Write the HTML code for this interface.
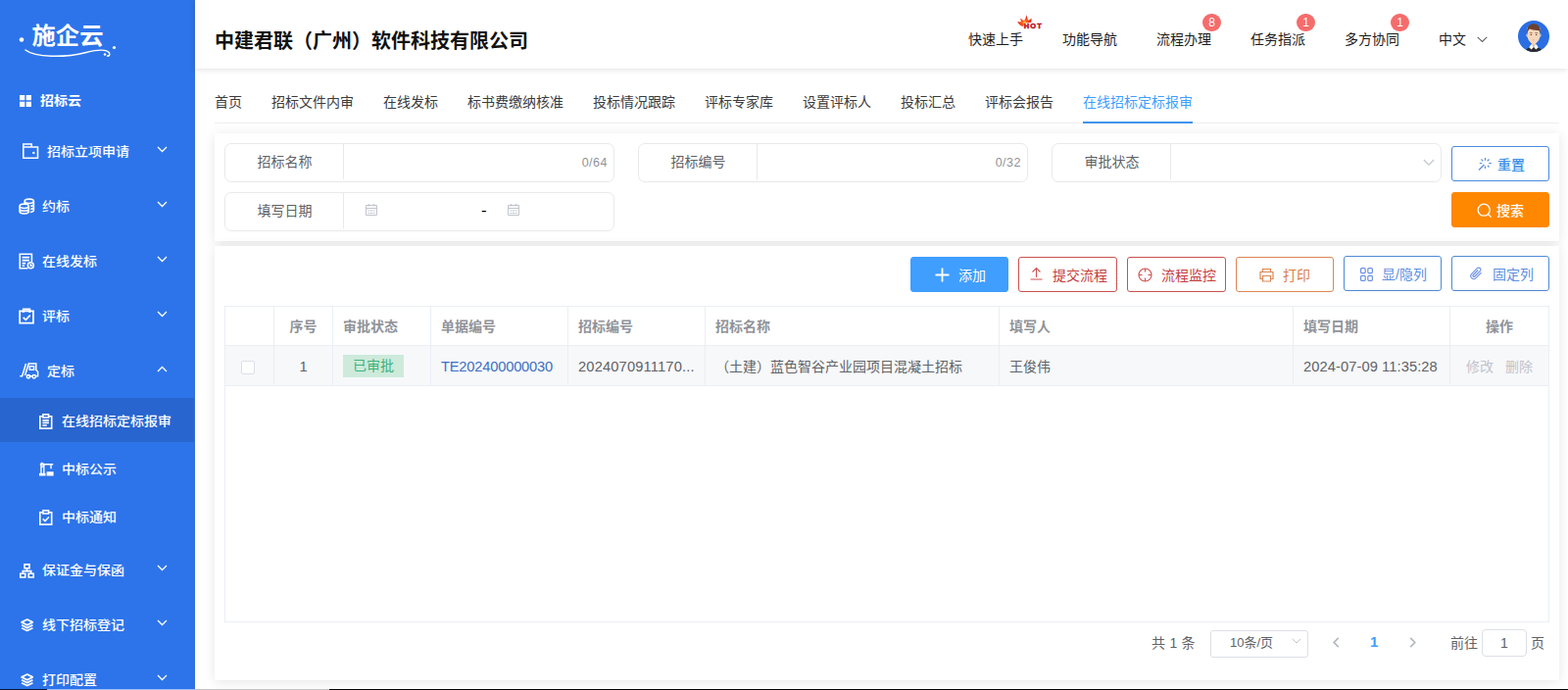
<!DOCTYPE html>
<html lang="zh-CN">
<head>
<meta charset="utf-8">
<title>在线招标定标报审</title>
<style>
*{box-sizing:border-box;margin:0;padding:0}
html,body{width:1600px;height:704px;overflow:hidden;background:#fff}
body{font-family:"Liberation Sans","Noto Sans CJK SC",sans-serif;font-size:14px;color:#303133;position:relative}
.abs{position:absolute}
/* sidebar */
#side{position:absolute;left:0;top:0;width:199px;height:704px;background:#2d74ea;color:#fff;overflow:hidden;border-right:1px solid #3670d2}
#side .it{position:absolute;left:0;width:199px;height:56px;line-height:56px;font-size:14px;font-weight:500;white-space:nowrap}
#side .it.b{font-weight:700}
#side .it span{position:absolute;top:1px;transform:translateY(-.6px) scaleY(.93)}
#side .sub span{top:2px !important}
#side .it.b span{top:0}
#side .it svg{position:absolute}
#side .sub{height:45px;line-height:45px}
#side .act{background:#2865cf}
#side .arr{position:absolute;left:160px;top:50%;margin-top:-5px;width:11px;height:7px}
/* header */
#head{position:absolute;left:199px;top:0;width:1401px;height:70px;background:#fff;box-shadow:0 1px 6px rgba(0,0,0,.12)}
#head h1{position:absolute;left:20px;top:28px;font-size:20px;line-height:28px;font-weight:700;color:#111;white-space:nowrap}
#head .nav{position:absolute;top:26px;font-size:14px;line-height:28px;color:#1c1c1e;white-space:nowrap}
#head .bdg{position:absolute;top:14px;width:19px;height:18px;border-radius:9px;background:#f56c6c;color:#fff;font-size:12px;line-height:18px;text-align:center}
/* tabs */
#tabs{position:absolute;left:219px;top:83px;width:1372px;height:43px;border-bottom:1px solid #eeeff2}
#tabs span{position:absolute;top:0;line-height:42px;font-size:14px;color:#3a3b3d;white-space:nowrap}
#tabs span.on{color:#409eff}
#tabs i{position:absolute;left:886px;top:41px;width:112px;height:2px;background:#3f93ec}
/* cards */
.card{position:absolute;left:219px;width:1372px;background:#fff;box-shadow:0 2px 12px 0 rgba(0,0,0,.1)}
.grp{position:absolute;height:40px;border:1px solid #e8e9eb;border-radius:7px;background:#fff}
.grp .lb{position:absolute;left:0;top:-1px;width:121px;height:38px;line-height:38px;text-align:center;color:#606266;font-size:14px}
.grp .dv{position:absolute;left:120px;top:0;width:1px;height:36px;background:#e8e9eb}
.grp .cnt{position:absolute;right:6px;top:0;line-height:38px;font-size:12.5px;letter-spacing:.5px;color:#909399}
.btn{position:absolute;height:36px;border-radius:3px;font-size:14px;line-height:34px;border:1px solid;white-space:nowrap}
.btn span{position:absolute;top:1px}
.btn svg{position:absolute}
/* table */
#tbl{position:absolute;left:10px;top:61px;width:1352px;height:323px;border:1px solid #ebeef5;background:#fff}
#tbl .hr{position:absolute;left:0;top:0;width:1350px;height:40px;background:#fff;border-bottom:1px solid #ebeef5}
#tbl .dr{position:absolute;left:0;top:40px;width:1350px;height:41px;background:#f7f8fa;border-bottom:1px solid #ebeef5}
#tbl .c{position:absolute;top:0;height:100%;border-right:1px solid #ebeef5;padding-left:10px;white-space:nowrap;overflow:hidden}
#tbl .hr .c{line-height:40px;color:#909399;font-weight:700;font-size:14px}
#tbl .dr .c{line-height:42px;color:#606266;font-size:14px}
</style>
</head>
<body>
<div id="side">
<div class="logo"><svg width="120" height="50" viewBox="0 0 120 50" style="position:absolute;left:0;top:15px"><circle cx="22" cy="25.500" r="2.300" fill="#fff"/><circle cx="116.500" cy="33.500" r="1.600" fill="#fff"/><circle cx="107" cy="40.500" r="1.200" fill="#fff"/><path d="M26 36c10 8 40 8 62 2.500 10-2.500 21-3.500 23.500.5 1 2-.5 3.500-2 3" fill="none" stroke="#fff" stroke-width="1.500" stroke-linecap="round"/><text x="32.500" y="29.600" font-family="'Liberation Sans','Noto Sans CJK SC',sans-serif" font-size="24" font-weight="700" fill="#fff" textLength="73" lengthAdjust="spacingAndGlyphs">施企云</text></svg></div>
<div class="it b" style="top:80px;height:46px;line-height:46px"><svg style="left:20px;top:17px" width="12" height="12" viewBox="0 0 12 12"><path fill="#fff" d="M0 0h5.3v5.3H0zM6.7 0H12v5.3H6.7zM0 6.7h5.3V12H0zM6.7 6.7H12V12H6.7z"/></svg><span style="left:41px">招标云</span></div>
<div class="it" style="top:126px;height:56px;line-height:56px"><svg style="left:23px;top:20px" width="17" height="17" viewBox="0 0 17 17"><path fill="none" stroke="#fff" stroke-width="1.600" d="M.8 4h14.700v11.300H.8zM.8 4V1h8.400v3"/><circle cx="11.300" cy="10" r="1.200" fill="#fff"/></svg><span style="left:48px">招标立项申请</span><svg class="arr" viewBox="0 0 11 7"><path d="M1 1l4.5 4.5L10 1" fill="none" stroke="#fff" stroke-width="1.3"/></svg></div>
<div class="it" style="top:182px;height:56px;line-height:56px"><svg style="left:19px;top:20px" width="17" height="17" viewBox="0 0 17 17"><g fill="none" stroke="#fff" stroke-width="1.600"><ellipse cx="10.8" cy="3.3" rx="4.6" ry="2.2"/><path d="M6.2 3.3v2.6M15.4 3.3v9c0 1.2-1.6 2-3.6 2.2M15.4 6.3c0 1-1.300 1.800-3.200 2.100M15.400 9.300c0 1-1.300 1.800-3.200 2.100"/><ellipse cx="5.700" cy="8.300" rx="4.600" ry="2.200"/><path d="M1.100 8.300v5.500c0 1.200 2 2.200 4.600 2.200s4.600-1 4.600-2.200V8.300M1.100 11c0 1.200 2 2.200 4.600 2.200s4.600-1 4.600-2.200"/></g></svg><span style="left:43px">约标</span><svg class="arr" viewBox="0 0 11 7"><path d="M1 1l4.5 4.5L10 1" fill="none" stroke="#fff" stroke-width="1.3"/></svg></div>
<div class="it" style="top:238px;height:56px;line-height:56px"><svg style="left:19px;top:20px" width="17" height="17" viewBox="0 0 17 17"><g fill="none" stroke="#fff" stroke-width="1.600"><path d="M13.400 9V1.300H1.300v14.400h8"/><path d="M3.600 4.600h7.400M3.600 7.600h7.400M3.600 10.600h3.600M3.600 13.200h2.600"/><circle cx="12.300" cy="12.700" r="3"/><path d="M12.300 11.200v1.700h1.500"/></g></svg><span style="left:43px">在线发标</span><svg class="arr" viewBox="0 0 11 7"><path d="M1 1l4.5 4.5L10 1" fill="none" stroke="#fff" stroke-width="1.3"/></svg></div>
<div class="it" style="top:294px;height:56px;line-height:56px"><svg style="left:19px;top:20px" width="17" height="17" viewBox="0 0 17 17"><g fill="none" stroke="#fff" stroke-width="1.800"><path d="M1.200 3.400h13.800v12.300H1.200z"/><path d="M4.900 5V1.500h6.400V5" stroke-width="2"/><path d="M4.700 9.800l2.600 2.500 4.500-4.600"/></g></svg><span style="left:43px">评标</span><svg class="arr" viewBox="0 0 11 7"><path d="M1 1l4.5 4.5L10 1" fill="none" stroke="#fff" stroke-width="1.3"/></svg></div>
<div class="it" style="top:350px;height:56px;line-height:56px"><svg style="left:20px;top:20px" width="20" height="17" viewBox="0 0 20 17"><g fill="none" stroke="#fff" stroke-width="1.500"><path d="M6.500 1L2.600 13.800H.3M9.300 1l-3.800 12"/><path d="M8.700 1h8.100v6.500l1.800 1.700v4.500h-1.500M10.300 7.300V3.700h4.300v3.600zM9 13.700h5"/><circle cx="9" cy="14.200" r="1.700"/><circle cx="14.700" cy="14.200" r="1.700"/></g></svg><span style="left:48px">定标</span><svg class="arr" viewBox="0 0 11 7"><path d="M1 6l4.5-4.5L10 6" fill="none" stroke="#fff" stroke-width="1.3"/></svg></div>
<div class="it sub act" style="top:406px;height:45px;line-height:45px"><svg style="left:40px;top:15.500px" width="14" height="16" viewBox="0 0 15 17"><g fill="none" stroke="#fff" stroke-width="1.700"><path d="M4 2.800H.9v13.300h12.700V2.800h-3.100"/><path d="M4.200 4.300V.9h6.100v3.400z"/><path d="M3.600 7.300h7M3.600 10h7M3.600 12.800h4.800"/></g></svg><span style="left:63px">在线招标定标报审</span></div>
<div class="it sub" style="top:455px;height:45px;line-height:45px"><svg style="left:40px;top:16px" width="15" height="15" viewBox="0 0 15 15"><g fill="none" stroke="#fff" stroke-width="1.400"><path d="M2 1.500v11M4.800 2.500v10"/><path d="M.8 2.700h13.400M2 1l3 1.700M2 6l2.800-2M12 2.700v4.500"/></g><path fill="#fff" d="M0 11.800h6.500v2.700H0zM7.600 10.300h7v4.200h-7z"/></svg><span style="left:63px">中标公示</span></div>
<div class="it sub" style="top:504px;height:45px;line-height:45px"><svg style="left:40px;top:15.500px" width="14" height="16" viewBox="0 0 15 17"><g fill="none" stroke="#fff" stroke-width="1.700"><path d="M4 2.800H.9v13.300h12.700V2.800h-3.100"/><path d="M4.200 4.300V.9h6.100v3.400z"/><path d="M4 10l2.400 2.300 4.200-4.300"/></g></svg><span style="left:63px">中标通知</span></div>
<div class="it" style="top:553px;height:56px;line-height:56px"><svg style="left:20px;top:22px" width="15" height="15" viewBox="0 0 15 15"><g fill="none" stroke="#fff" stroke-width="1.600"><path d="M5 .9h5v3.900H5zM.8 10.300h5V14h-5zM9.200 10.300h5V14h-5z"/><path d="M7.500 4.800v2.800M3.300 10.300V7.600h8.400v2.700"/></g></svg><span style="left:43px">保证金与保函</span><svg class="arr" viewBox="0 0 11 7"><path d="M1 1l4.5 4.5L10 1" fill="none" stroke="#fff" stroke-width="1.3"/></svg></div>
<div class="it" style="top:609px;height:56px;line-height:56px"><svg style="left:20.500px;top:22px" width="13.500" height="13.500" viewBox="0 0 15 15"><g fill="none" stroke="#fff" stroke-width="1.900" stroke-linejoin="round"><path d="M7.500 1.200L13.800 4.300 7.500 7.400 1.200 4.300z"/><path d="M1.200 7.600l6.300 3.100 6.300-3.100M1.200 10.800l6.300 3.100 6.300-3.100"/></g></svg><span style="left:43px">线下招标登记</span><svg class="arr" viewBox="0 0 11 7"><path d="M1 1l4.5 4.5L10 1" fill="none" stroke="#fff" stroke-width="1.3"/></svg></div>
<div class="it" style="top:665px;height:56px;line-height:56px"><svg style="left:20.500px;top:22px" width="13.500" height="13.500" viewBox="0 0 15 15"><g fill="none" stroke="#fff" stroke-width="1.900" stroke-linejoin="round"><path d="M7.500 1.200L13.800 4.300 7.500 7.400 1.200 4.300z"/><path d="M1.200 7.600l6.300 3.100 6.300-3.100M1.200 10.800l6.300 3.100 6.300-3.100"/></g></svg><span style="left:43px">打印配置</span><svg class="arr" viewBox="0 0 11 7"><path d="M1 1l4.5 4.5L10 1" fill="none" stroke="#fff" stroke-width="1.3"/></svg></div>
</div>
<div id="head"><h1>中建君联（广州）软件科技有限公司</h1>
<span class="nav" style="left:789px">快速上手</span><span class="nav" style="left:885px">功能导航</span><span class="nav" style="left:981px">流程办理</span><span class="nav" style="left:1077px">任务指派</span><span class="nav" style="left:1173px">多方协同</span><span class="nav" style="left:1269px">中文</span>
<svg class="abs" style="left:838px;top:14px" width="28" height="17" viewBox="0 0 28 17"><defs><radialGradient id="fl" cx="8.500" cy="9" r="6" gradientUnits="userSpaceOnUse"><stop offset="0" stop-color="#ffd23a"/><stop offset=".35" stop-color="#ff6a1a"/><stop offset="1" stop-color="#e8281c"/></radialGradient></defs><path d="M1.200 7.800C2.800 8.600 4 8.600 5 8 4.400 6.600 4.300 5.600 4.600 4.400 5.600 5.800 6.800 6.600 8.200 6.800 9.400 5 10.200 3 10.400 1c.6 2.200 1 4 1.600 5.600 1.400-.2 2.600-1 3.400-2.200.4 1.600.2 3.200-.6 4.600L8.500 9.400 6.800 13C4 12.200 2 10.400 1.200 7.800z" fill="url(#fl)"/><text x="7.800" y="15.200" font-family="'Liberation Sans',sans-serif" font-size="7.500" font-weight="700" fill="#c40d1e" stroke="#c40d1e" stroke-width=".55" textLength="18" lengthAdjust="spacing">HOT</text></svg>
<span class="bdg" style="left:1028px">8</span><span class="bdg" style="left:1124px">1</span><span class="bdg" style="left:1220px">1</span>
<svg class="abs" style="left:1308px;top:37px" width="11" height="7" viewBox="0 0 11 7"><path d="M.7.800l4.800 4.700L10.300.800" fill="none" stroke="#606266" stroke-width="1.100"/></svg>
<svg class="abs" style="left:1350px;top:21px" width="32" height="32" viewBox="0 0 32 32"><defs><clipPath id="av"><circle cx="16" cy="16" r="16"/></clipPath></defs><g clip-path="url(#av)"><rect width="32" height="32" fill="#2a6ee4"/><path d="M7 33c.3-3.500 2.500-5.300 6-6l3-1.500 3 1.500c3.500.7 5.700 2.500 6 6z" fill="#2b2b2d"/><path d="M11.300 27.300l2.200-3.300 2.500 2.800 2.500-2.800 2.200 3.300-2.300 2.200-2.400-2.400-2.400 2.400z" fill="#fff"/><path d="M14 20.500h4v4l-2 2.300-2-2.300z" fill="#efc9a8"/><path d="M9.300 13.500c-.9-.2-1.200 1.600-.4 2.800.3.500.8.600 1.100.4zM22.700 13.500c.9-.2 1.200 1.600.4 2.800-.3.500-.8.600-1.100.4z" fill="#f7dcc4"/><path d="M9.600 7h12.800v8.500c0 3.200-1.800 6-4.400 7.900-1.200.9-2.800.9-4 0-2.600-1.900-4.400-4.700-4.400-7.900z" fill="#f6d7ba"/><path d="M9.300 13.600C8.600 8 11 3.300 16 3.300s7.400 4.700 6.700 10.300c-.4-1.600-.9-2.700-1.600-3.600-3.300.3-6.900-.3-9.200-1.400-1.300 1-2.200 2.800-2.600 5z" fill="#6b4130"/><path d="M11.800 12.800c.9-.5 2-.5 2.900 0M17.300 12.800c.9-.5 2-.5 2.900 0" stroke="#6b4130" stroke-width=".6" fill="none"/><ellipse cx="13.300" cy="14.300" rx=".8" ry=".6" fill="#4a3226"/><ellipse cx="18.700" cy="14.300" rx=".8" ry=".6" fill="#4a3226"/><path d="M15.200 19.700c.5.300 1.100.300 1.600 0" stroke="#e3a08c" stroke-width=".7" fill="none"/></g></svg>
</div>
<div id="tabs"><span style="left:0px">首页</span><span style="left:58px">招标文件内审</span><span style="left:172px">在线发标</span><span style="left:258px">标书费缴纳核准</span><span style="left:386px">投标情况跟踪</span><span style="left:500px">评标专家库</span><span style="left:600px">设置评标人</span><span style="left:700px">投标汇总</span><span style="left:786px">评标会报告</span><span style="left:886px" class="on">在线招标定标报审</span><i></i></div>
<div id="search" class="card" style="top:136px;height:110px">
<div class="grp" style="left:10px;top:10px;width:398px"><div class="lb">招标名称</div><div class="dv"></div><span class="cnt">0/64</span></div>
<div class="grp" style="left:432px;top:10px;width:398px"><div class="lb">招标编号</div><div class="dv"></div><span class="cnt">0/32</span></div>
<div class="grp" style="left:854px;top:10px;width:398px"><div class="lb">审批状态</div><div class="dv"></div><svg class="abs" style="left:378px;top:15px" width="12" height="8" viewBox="0 0 12 8"><path d="M.8 1l5.200 5.200L11.200 1" fill="none" stroke="#c0c4cc" stroke-width="1.100"/></svg></div>
<div class="grp" style="left:10px;top:60px;width:398px"><div class="lb">填写日期</div><div class="dv"></div><svg class="abs" style="left:142px;top:10px" width="14" height="14" viewBox="0 0 14 14"><g fill="none" stroke="#c0c4cc" stroke-width="1"><path d="M1.500 2.500h11v10h-11zM1.500 5.500h11M4.500 1v2.500M9.500 1v2.500"/><path d="M3.500 8h2M6 8h2M8.500 8h2M3.500 10.500h2M6 10.500h2M8.500 10.500h2" stroke-width="1"/></g></svg><span class="abs" style="left:261px;top:-1.5px;line-height:38px;font-size:17px;color:#000">-</span><svg class="abs" style="left:287px;top:10px" width="14" height="14" viewBox="0 0 14 14"><g fill="none" stroke="#c0c4cc" stroke-width="1"><path d="M1.500 2.500h11v10h-11zM1.500 5.500h11M4.500 1v2.500M9.500 1v2.500"/><path d="M3.500 8h2M6 8h2M8.500 8h2M3.500 10.500h2M6 10.500h2M8.500 10.500h2" stroke-width="1"/></g></svg></div>
<div class="btn" style="left:1262px;top:13px;width:100px;border-color:#4a8ade;color:#3a8ee6;background:#fff"><svg style="left:26px;top:10px" width="15" height="15" viewBox="0 0 15 15"><g fill="none" stroke="#5b8fe0" stroke-width="1.200"><path d="M1 13.500l5.500-5.500"/><path d="M7.500 1v2.800M7.500 9.500v2.500M11.200 6.500H14M1.800 6.500h2.500M3.500 2.500l1.800 1.800M11.500 2.500L9.700 4.300M10 9l1.500 1.500"/></g></svg><span style="left:46px;font-weight:500">重置</span></div>
<div class="btn" style="left:1262px;top:60px;width:100px;border-color:#ff8800;color:#fff;background:#ff8800"><svg style="left:25px;top:10px" width="16" height="16" viewBox="0 0 16 16"><g fill="none" stroke="#fff" stroke-width="1.300"><circle cx="7.200" cy="7.200" r="6"/><path d="M11.500 11.500l3 3"/></g></svg><span style="left:45px;font-weight:500">搜索</span></div>
</div>
<div id="main" class="card" style="top:251px;height:443px">
<div class="btn" style="left:710px;top:11px;width:100px;border-color:#409eff;background:#409eff;color:#fff"><svg style="left:24px;top:10px" width="15" height="15" viewBox="0 0 15 15"><path d="M7.500 .5v14M.5 7.500h14" stroke="#fff" stroke-width="1.800" fill="none"/></svg><span style="left:48px">添加</span></div>
<div class="btn" style="left:820px;top:11px;width:101px;border-color:#c9524f;background:#fff;color:#c43d3d"><svg style="left:11px;top:9px" width="13" height="14" viewBox="0 0 13 14"><path d="M6.500 11V1.500M2.500 5.500l4-4 4 4M.5 13h12" stroke="#cb5350" stroke-width="1.100" fill="none"/></svg><span style="left:34px">提交流程</span></div>
<div class="btn" style="left:931px;top:11px;width:101px;border-color:#c9524f;background:#fff;color:#c43d3d"><svg style="left:9.500px;top:10px" width="15" height="15" viewBox="0 0 15 15"><g stroke="#cb5350" stroke-width="1.100" fill="none"><circle cx="7.500" cy="7.500" r="6.500"/><path d="M7.500 1v3.500M7.500 10.500V14M1 7.500h3.500M10.500 7.500H14"/></g></svg><span style="left:34px">流程监控</span></div>
<div class="btn" style="left:1042px;top:11px;width:100px;border-color:#db8652;background:#fff;color:#d87e46"><svg style="left:23px;top:10px" width="15" height="15" viewBox="0 0 15 15"><g stroke="#db8652" stroke-width="1.200" fill="none"><path d="M3.500 4.500V1.500h8v3M3.500 11.500h-2.500v-7h13v7h-2.500"/><path d="M3.500 8.500h8v5.500h-8z"/></g></svg><span style="left:47px">打印</span></div>
<div class="btn" style="left:1152px;top:10px;width:100px;border-color:#4f8ad6;background:#fff;color:#5b8fe0"><svg style="left:16px;top:11px" width="13" height="14" viewBox="0 0 13 13" preserveAspectRatio="none"><g stroke="#6b8fe6" stroke-width="1.200" fill="none"><rect x=".6" y=".6" width="4.600" height="4.600" rx="1"/><rect x="7.800" y=".6" width="4.600" height="4.600" rx="1"/><rect x=".6" y="7.800" width="4.600" height="4.600" rx="1"/><rect x="7.800" y="7.800" width="4.600" height="4.600" rx="1"/></g></svg><span style="left:38px">显/隐列</span></div>
<div class="btn" style="left:1262px;top:10px;width:100px;border-color:#4f8ad6;background:#fff;color:#5b8fe0"><svg style="left:17px;top:10px" width="14" height="14" viewBox="0 0 14 14"><path d="M12.500 6.200L7 11.700a3 3 0 0 1-4.300-4.300l5.700-5.700a2 2 0 0 1 2.900 2.900L5.800 10a1 1 0 0 1-1.500-1.500l5-5" stroke="#6b8fe6" stroke-width="1.100" fill="none"/></svg><span style="left:41px">固定列</span></div>
<div id="tbl">
 <div class="hr">
  <div class="c" style="left:0;width:50px"></div>
  <div class="c" style="left:50px;width:60px;padding:0;text-align:center">序号</div>
  <div class="c" style="left:110px;width:100px">审批状态</div>
  <div class="c" style="left:210px;width:140px">单据编号</div>
  <div class="c" style="left:350px;width:140px">招标编号</div>
  <div class="c" style="left:490px;width:300px">招标名称</div>
  <div class="c" style="left:790px;width:300px">填写人</div>
  <div class="c" style="left:1090px;width:160px">填写日期</div>
  <div class="c" style="left:1250px;width:100px;padding:0;text-align:center;border-right:0">操作</div>
 </div>
 <div class="dr">
  <div class="c" style="left:0;width:50px"><i class="abs" style="left:16px;top:15px;width:14px;height:14px;border:1px solid #dcdfe6;border-radius:2px;background:#fff"></i></div>
  <div class="c" style="left:50px;width:60px;padding:0;text-align:center;font-size:14.700px">1</div>
  <div class="c" style="left:110px;width:100px"><span class="abs" style="left:10px;top:9px;width:62px;height:23px;line-height:23px;background:#cdeadb;color:#3db27a;text-align:center">已审批</span></div>
  <div class="c" style="left:210px;width:140px;color:#3f6fc4;font-size:14.700px;letter-spacing:-.2px">TE202400000030</div>
  <div class="c" style="left:350px;width:140px;font-size:14.700px;letter-spacing:.15px">2024070911170...</div>
  <div class="c" style="left:490px;width:300px">（土建）蓝色智谷产业园项目混凝土招标</div>
  <div class="c" style="left:790px;width:300px">王俊伟</div>
  <div class="c" style="left:1090px;width:160px;font-size:14.700px;letter-spacing:.08px">2024-07-09 11:35:28</div>
  <div class="c" style="left:1250px;width:100px;padding:0;border-right:0;color:#c0c4cc"><span class="abs" style="left:16px">修改</span><span class="abs" style="left:56px">删除</span></div>
 </div>
</div>
<div id="pg">
 <span class="abs" style="left:956px;top:390px;line-height:30px;font-size:14px;color:#606266;word-spacing:.5px">共 1 条</span>
 <div class="abs" style="left:1016px;top:392px;width:100px;height:28px;border:1px solid #dcdfe6;border-radius:3px;background:#fff"><span class="abs" style="left:19px;top:-1px;line-height:26px;font-size:13px;color:#606266">10条/页</span><svg class="abs" style="left:82px;top:7px" width="10" height="7" viewBox="0 0 10 7"><path d="M.7.800l4.300 4.300L9.300.800" fill="none" stroke="#c0c4cc" stroke-width="1"/></svg></div>
 <svg class="abs" style="left:1141px;top:399px" width="7" height="11" viewBox="0 0 7 11"><path d="M5.800.8L1.200 5.500l4.600 4.700" fill="none" stroke="#b4b8bf" stroke-width="1.700"/></svg>
 <span class="abs" style="left:1179px;top:389px;line-height:30px;font-size:15px;font-weight:700;color:#409eff">1</span>
 <svg class="abs" style="left:1219px;top:399px" width="7" height="11" viewBox="0 0 7 11"><path d="M1.200.8l4.600 4.700-4.600 4.700" fill="none" stroke="#b4b8bf" stroke-width="1.700"/></svg>
 <span class="abs" style="left:1261px;top:390px;line-height:30px;font-size:14px;color:#606266">前往</span>
 <div class="abs" style="left:1293px;top:391px;width:46px;height:28px;border:1px solid #dcdfe6;border-radius:4px;background:#fff;text-align:center;line-height:27px;font-size:14px;color:#606266">1</div>
 <span class="abs" style="left:1343px;top:390px;line-height:30px;font-size:14px;color:#606266">页</span>
</div>
</div>
<div id="strip" class="abs" style="left:0;top:703px;width:1600px;height:1px;background:linear-gradient(90deg,#06163a 0,#06163a 48px,#9dbdf5 48px,#9dbdf5 199px,#c4c4c4 199px,#c4c4c4 336px,#000 336px,#000 100%)"></div>
</body>
</html>
